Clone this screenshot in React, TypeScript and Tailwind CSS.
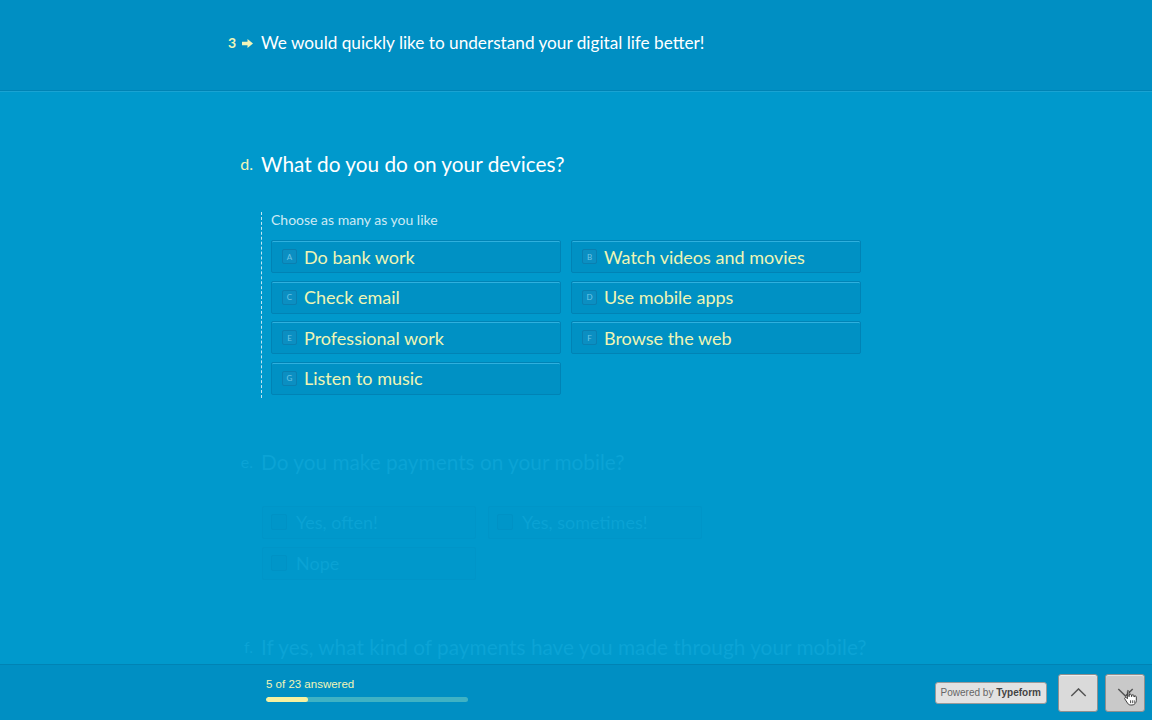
import React from 'react'

const choices = [
  { key: 'A', label: 'Do bank work' },
  { key: 'B', label: 'Watch videos and movies' },
  { key: 'C', label: 'Check email' },
  { key: 'D', label: 'Use mobile apps' },
  { key: 'E', label: 'Professional work' },
  { key: 'F', label: 'Browse the web' },
  { key: 'G', label: 'Listen to music' },
]

const payments = [
  { key: 'A', label: 'Yes, often!' },
  { key: 'B', label: 'Yes, sometimes!' },
  { key: 'C', label: 'Nope' },
]

const font = { fontFamily: 'Lato, "Open Sans", sans-serif' }

function HandCursor() {
  return (
    <svg viewBox="0 0 16 18" className="absolute right-[6px] bottom-[5px] w-[15px] h-[17px]">
      <path
        d="M5 1.5c.8 0 1.3.6 1.3 1.3V8h.3V6.6c0-.7.6-1.2 1.2-1.2s1.2.5 1.2 1.2V8h.3V7.2c0-.7.5-1.2 1.2-1.2s1.2.5 1.2 1.2V8.4h.2c0-.6.5-1.1 1.1-1.1.7 0 1.2.5 1.2 1.2v3.6c0 2.6-1.9 4.9-4.6 4.9H8.3c-1.6 0-2.6-.7-3.4-1.9L2 10.6c-.4-.6-.2-1.3.4-1.6.5-.3 1.1-.2 1.5.3l.8 1V2.8c0-.7.1-1.3.3-1.3z"
        fill="#fff"
        stroke="#222"
        strokeWidth="0.9"
        strokeLinejoin="round"
      />
      <path d="M8 12v3M10 12v3M12 12v3" stroke="#222" strokeWidth="0.8" />
    </svg>
  )
}

export default function App() {
  return (
    <div className="w-[1152px] h-[720px] flex flex-col bg-[#0099cc] overflow-hidden" style={font}>
      {/* Header */}
      <div className="h-[91px] shrink-0 bg-[#008fc3] border-b border-[#0083b4] shadow-[0_1px_0_#1aa3d3]">
        <div className="w-[700px] mx-auto flex items-center gap-2 pt-[30px]">
          <div className="w-[27px] flex items-center justify-end gap-[6px] text-[#f1f5b8]">
            <span className="text-[14px] font-bold leading-none">3</span>
            <svg viewBox="0 0 10 8" className="w-[11px] h-[9px]">
              <path d="M0 2.3h5V0l5 4-5 4V5.7H0z" fill="#f1f5b8" />
            </svg>
          </div>
          <span className="text-white text-[17.2px] leading-[26px]">We would quickly like to understand your digital life better!</span>
        </div>
      </div>

      {/* Questions */}
      <div className="flex-1 overflow-hidden">
        <div className="w-[700px] mx-auto pt-[58px]">
          <div className="flex items-center gap-2">
            <span className="w-[27px] text-right text-[#f1f5b8] text-[16px] leading-[30px]">d.</span>
            <span className="text-white text-[20.8px] leading-[30px]">What do you do on your devices?</span>
          </div>

          <div className="ml-[35px] mt-[33px] border-l border-dashed border-[#bfe6f3] pl-[9px] pb-[3px]">
            <div className="text-[#cdeaf4] text-[14px] leading-[16px]">Choose as many as you like</div>
            <div className="mt-[12px] grid grid-cols-[290px_290px] gap-x-[10px] gap-y-[7.5px]">
              {choices.map((c) => (
                <div
                  key={c.key}
                  className="h-[33px] flex items-center gap-[7px] pl-[10px] rounded-[2px] bg-[#0091c4] border border-[#0083b5] shadow-[inset_0_1px_0_#2fb0de]"
                >
                  <span className="w-[15px] h-[15px] flex items-center justify-center rounded-[2px] border border-[#0a7fb0] bg-[#0b8fc2] text-[#72c6e5] text-[8px] leading-none">
                    {c.key}
                  </span>
                  <span className="text-[#eff5b4] text-[18px] leading-[24px]">{c.label}</span>
                </div>
              ))}
            </div>
          </div>

          {/* Faded next question */}
          <div className="mt-[49px] flex items-center gap-2 text-[#0ba3d5]">
            <span className="w-[27px] text-right text-[16px] leading-[30px]">e.</span>
            <span className="text-[20.8px] leading-[30px]">Do you make payments on your mobile?</span>
          </div>
          <div className="ml-[36px] mt-[29px] grid grid-cols-[214px_214px] gap-x-[12px] gap-y-[8px]">
            {payments.map((p) => (
              <div
                key={p.key}
                className="h-[33px] flex items-center gap-[9px] pl-[8px] rounded-[2px] border border-[#0095c8] bg-[#0098cb]"
              >
                <span className="w-[16px] h-[16px] rounded-[2px] border border-[#0092c5] bg-[#0096c9]" />
                <span className="text-[#0aa2d4] text-[18px] leading-[24px]">{p.label}</span>
              </div>
            ))}
          </div>

          <div className="mt-[52px] flex items-center gap-2 text-[#0ba3d5]">
            <span className="w-[27px] text-right text-[16px] leading-[30px]">f.</span>
            <span className="text-[20.8px] leading-[30px]">If yes, what kind of payments have you made through your mobile?</span>
          </div>
        </div>
      </div>

      {/* Footer */}
      <div className="h-[56px] shrink-0 bg-[#008fc3] border-t border-[#0083b4] flex items-center relative">
        <div className="absolute left-[266px] top-[12px]" style={{ fontFamily: '"Liberation Sans", Arial, sans-serif' }}>
          <div className="text-[#f1f5b8] text-[11.5px] leading-[14px]">5 of 23 answered</div>
          <div className="mt-[6px] w-[202px] h-[5px] rounded-full bg-[#3fb2c4] overflow-hidden">
            <div className="h-full rounded-full bg-[#f6f1a0]" style={{ width: '42px' }} />
          </div>
        </div>
        <div className="ml-auto mr-[7px] flex items-center gap-[7px]">
          <div
            className="mr-[4px] h-[22px] px-[5px] flex items-center rounded-[3px] bg-[#e2e2e2] border border-[#9a9a9a] text-[10px] text-[#666]"
            style={{ fontFamily: '"Liberation Sans", Arial, sans-serif' }}
          >
            Powered by&nbsp;<span className="font-bold text-[#444]">Typeform</span>
          </div>
          <div className="w-[40px] h-[38px] flex items-center justify-center rounded-[3px] bg-[#dadada] border border-[#8f8f8f] shadow-[inset_0_1px_0_#eee]">
            <svg viewBox="0 0 18 10" className="w-[17px] h-[9px]">
              <path d="M1 9L9 1l8 8" fill="none" stroke="#555" strokeWidth="1.6" />
            </svg>
          </div>
          <div className="relative w-[40px] h-[38px] flex items-center justify-center rounded-[3px] bg-[#c9c9c9] border border-[#8f8f8f] shadow-[inset_0_1px_0_#e4e4e4]">
            <svg viewBox="0 0 18 10" className="w-[17px] h-[9px]">
              <path d="M1 1l8 8 8-8" fill="none" stroke="#555" strokeWidth="1.6" />
            </svg>
            <HandCursor />
          </div>
        </div>
      </div>
    </div>
  )
}
